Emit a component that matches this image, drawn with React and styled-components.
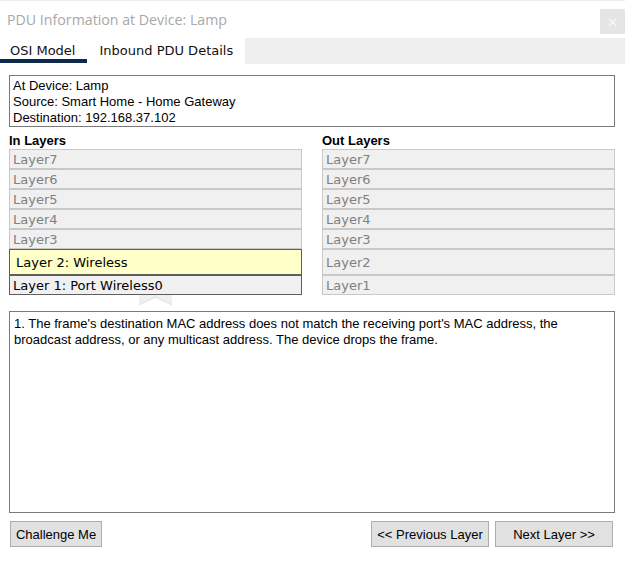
import React from "react";
import styled, { createGlobalStyle } from "styled-components";

const GlobalStyle = createGlobalStyle`
    html, body {
        margin: 0;
        padding: 0;
        background: #ffffff;
        overflow: hidden;
    }
    * {
        box-sizing: border-box;
    }
`;

const Window = styled.div`
    width: 625px;
    height: 573px;
    background: #ffffff;
    display: flex;
    flex-direction: column;
`;

const TopStrip = styled.div`
    height: 1px;
    background: #ececec;
`;

const TitleBar = styled.div`
    height: 37px;
    display: flex;
    align-items: flex-start;
    justify-content: space-between;
`;

const Title = styled.div`
    padding: 9px 0 0 7px;
    font-family: "Open Sans", "Noto Sans", sans-serif;
    font-size: 14.2px;
    line-height: 20px;
    color: #a8a8a8;
`;

const CloseButton = styled.div`
    width: 25px;
    height: 25px;
    margin-top: 8px;
    background: #e5e5e5;
    color: #fafafa;
    display: flex;
    align-items: center;
    justify-content: center;
    font-family: "DejaVu Sans", sans-serif;
    font-size: 14px;
`;

const TabBar = styled.div`
    height: 26px;
    display: flex;
    align-items: flex-start;
`;

const Tab = styled.div`
    height: 25px;
    padding: 5px 12px 0 ${(p) => (p.first ? "10px" : "12px")};
    font-family: "DejaVu Sans", Verdana, sans-serif;
    font-size: 13px;
    line-height: 16px;
    color: #111111;
    border-bottom: 4px solid ${(p) => (p.active ? "#0e2a4d" : "transparent")};
    white-space: nowrap;
`;

const TabFiller = styled.div`
    flex: 1;
    align-self: stretch;
    background: #efefef;
`;

const Body = styled.div`
    padding: 11px 10px 0 9px;
    display: flex;
    flex-direction: column;
`;

const InfoBox = styled.div`
    height: 52px;
    border: 1px solid #7a7a7a;
    padding: 2px 3px;
    font-family: "Liberation Sans", Arial, sans-serif;
    font-size: 13px;
    line-height: 16px;
    color: #000000;
`;

const Columns = styled.div`
    display: grid;
    grid-template-columns: 293px 293px;
    column-gap: 20px;
`;

const Column = styled.div`
    display: flex;
    flex-direction: column;
`;

const ColumnHeader = styled.div`
    height: 22px;
    padding-top: 7px;
    font-family: "Liberation Sans", Arial, sans-serif;
    font-weight: bold;
    font-size: 13px;
    line-height: 14px;
    color: #000000;
`;

const LayerRow = styled.div`
    height: ${(p) => (p.tall ? "26px" : "20px")};
    border: 1px solid ${(p) => (p.current ? "#5e5e5e" : "#c8c8c8")};
    background: ${(p) => (p.highlight ? "#ffffc8" : "#f0f0f0")};
    padding-left: ${(p) => (p.highlight ? "6px" : "3px")};
    display: flex;
    align-items: center;
    font-family: "DejaVu Sans", Verdana, sans-serif;
    font-size: 13px;
    color: ${(p) => (p.current ? "#000000" : "#808080")};
    white-space: nowrap;
`;

const ArrowWrap = styled.div`
    height: 10px;
    display: flex;
    justify-content: center;
`;

const DescBox = styled.div`
    margin-top: 6px;
    height: 202px;
    border: 1px solid #7a7a7a;
    padding: 4px 4px;
    font-family: "Liberation Sans", Arial, sans-serif;
    font-size: 13px;
    line-height: 16px;
    color: #000000;
`;

const ButtonRow = styled.div`
    margin-top: 8px;
    padding: 0 2px 0 1px;
    display: flex;
    align-items: center;
    gap: 6px;
`;

const Spacer = styled.div`
    flex: 1;
`;

const Button = styled.div`
    width: ${(p) => p.w}px;
    height: 26px;
    border: 1px solid #adadad;
    background: #e1e1e1;
    display: flex;
    align-items: center;
    justify-content: center;
    font-family: "Liberation Sans", Arial, sans-serif;
    font-size: 13px;
    color: #000000;
`;

const UpArrow = () => (
    <svg width="33" height="10" viewBox="0 0 33 10">
        <rect x="0" y="0" width="33" height="10" fill="#f0f0f0" />
        <polygon points="0,10 16.5,2 33,10" fill="#ffffff" />
        <polyline points="0,10 16.5,2 33,10" fill="none" stroke="#e0e0e0" strokeWidth="1" />
    </svg>
);

const upper = ["Layer7", "Layer6", "Layer5", "Layer4", "Layer3"];

const App = () => (
    <Window>
        <GlobalStyle />
        <TopStrip />
        <TitleBar>
            <Title>PDU Information at Device: Lamp</Title>
            <CloseButton>×</CloseButton>
        </TitleBar>
        <TabBar>
            <Tab first active>
                OSI Model
            </Tab>
            <Tab>Inbound PDU Details</Tab>
            <TabFiller />
        </TabBar>
        <Body>
            <InfoBox>
                At Device: Lamp
                <br />
                Source: Smart Home - Home Gateway
                <br />
                Destination: 192.168.37.102
            </InfoBox>
            <Columns>
                <Column>
                    <ColumnHeader>In Layers</ColumnHeader>
                    {upper.map((l) => (
                        <LayerRow key={l}>{l}</LayerRow>
                    ))}
                    <LayerRow tall current highlight>
                        Layer 2: Wireless
                    </LayerRow>
                    <LayerRow current>Layer 1: Port Wireless0</LayerRow>
                    <ArrowWrap>
                        <UpArrow />
                    </ArrowWrap>
                </Column>
                <Column>
                    <ColumnHeader>Out Layers</ColumnHeader>
                    {upper.map((l) => (
                        <LayerRow key={l}>{l}</LayerRow>
                    ))}
                    <LayerRow tall>Layer2</LayerRow>
                    <LayerRow>Layer1</LayerRow>
                </Column>
            </Columns>
            <DescBox>
                1. The frame's destination MAC address does not match the receiving port's MAC address, the broadcast address, or any multicast address. The
                device drops the frame.
            </DescBox>
            <ButtonRow>
                <Button w={92}>Challenge Me</Button>
                <Spacer />
                <Button w={118}>&lt;&lt; Previous Layer</Button>
                <Button w={118}>Next Layer &gt;&gt;</Button>
            </ButtonRow>
        </Body>
    </Window>
);

export default App;
